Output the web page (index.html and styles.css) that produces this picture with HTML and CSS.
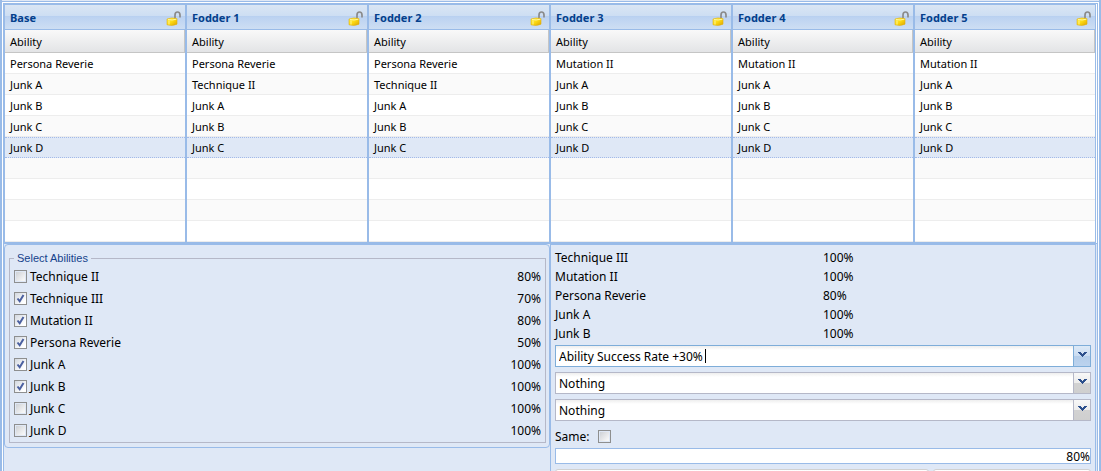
FILE: index.html
```html
<!DOCTYPE html>
<html lang="en">
<head>
<meta charset="utf-8">
<title>Ability Simulator</title>
<link rel="stylesheet" href="styles.css">
</head>
<body>
<svg class="defs" aria-hidden="true">
  <defs>
    <linearGradient id="gold" x1="0" y1="0" x2="1" y2="1">
      <stop offset="0" stop-color="#fff04a"/>
      <stop offset="0.5" stop-color="#fcd913"/>
      <stop offset="1" stop-color="#dda300"/>
    </linearGradient>
    <symbol id="lock" viewBox="0 0 16 16">
      <path d="M9 9V5Q9 2 11.500 2Q14 2 14 5V7.500" fill="none" stroke="#8a8a8a" stroke-width="1.700"/>
      <path d="M1 9Q6 7 11 8.600V14.200Q6 16.400 1 14.800Z" fill="url(#gold)" stroke="#e0b010" stroke-width="0.6"/>
      <path d="M2 9.500Q6 10.600 10.400 9.200" fill="none" stroke="#fff8a0" stroke-width="1"/>
      <path d="M3 10.500V14.500" stroke="#fff58c" stroke-width="1"/>
    </symbol>
  </defs>
</svg>
<main class="app">
  <div class="frame">
    <div class="grids">
      <section class="grid">
        <header class="title"><h2>Base</h2><button type="button" class="lock" aria-label="Lock Base"><svg><use href="#lock"/></svg></button></header>
        <table>
          <thead><tr><th>Ability</th></tr></thead>
          <tbody><tr><td>Persona Reverie</td></tr><tr><td>Junk A</td></tr><tr><td>Junk B</td></tr><tr><td>Junk C</td></tr><tr class="selected"><td>Junk D</td></tr><tr><td></td></tr><tr><td></td></tr><tr><td></td></tr><tr><td></td></tr></tbody>
        </table>
      </section>
      <section class="grid">
        <header class="title"><h2>Fodder 1</h2><button type="button" class="lock" aria-label="Lock Fodder 1"><svg><use href="#lock"/></svg></button></header>
        <table>
          <thead><tr><th>Ability</th></tr></thead>
          <tbody><tr><td>Persona Reverie</td></tr><tr><td>Technique II</td></tr><tr><td>Junk A</td></tr><tr><td>Junk B</td></tr><tr class="selected"><td>Junk C</td></tr><tr><td></td></tr><tr><td></td></tr><tr><td></td></tr><tr><td></td></tr></tbody>
        </table>
      </section>
      <section class="grid">
        <header class="title"><h2>Fodder 2</h2><button type="button" class="lock" aria-label="Lock Fodder 2"><svg><use href="#lock"/></svg></button></header>
        <table>
          <thead><tr><th>Ability</th></tr></thead>
          <tbody><tr><td>Persona Reverie</td></tr><tr><td>Technique II</td></tr><tr><td>Junk A</td></tr><tr><td>Junk B</td></tr><tr class="selected"><td>Junk C</td></tr><tr><td></td></tr><tr><td></td></tr><tr><td></td></tr><tr><td></td></tr></tbody>
        </table>
      </section>
      <section class="grid">
        <header class="title"><h2>Fodder 3</h2><button type="button" class="lock" aria-label="Lock Fodder 3"><svg><use href="#lock"/></svg></button></header>
        <table>
          <thead><tr><th>Ability</th></tr></thead>
          <tbody><tr><td>Mutation II</td></tr><tr><td>Junk A</td></tr><tr><td>Junk B</td></tr><tr><td>Junk C</td></tr><tr class="selected"><td>Junk D</td></tr><tr><td></td></tr><tr><td></td></tr><tr><td></td></tr><tr><td></td></tr></tbody>
        </table>
      </section>
      <section class="grid">
        <header class="title"><h2>Fodder 4</h2><button type="button" class="lock" aria-label="Lock Fodder 4"><svg><use href="#lock"/></svg></button></header>
        <table>
          <thead><tr><th>Ability</th></tr></thead>
          <tbody><tr><td>Mutation II</td></tr><tr><td>Junk A</td></tr><tr><td>Junk B</td></tr><tr><td>Junk C</td></tr><tr class="selected"><td>Junk D</td></tr><tr><td></td></tr><tr><td></td></tr><tr><td></td></tr><tr><td></td></tr></tbody>
        </table>
      </section>
      <section class="grid">
        <header class="title"><h2>Fodder 5</h2><button type="button" class="lock" aria-label="Lock Fodder 5"><svg><use href="#lock"/></svg></button></header>
        <table>
          <thead><tr><th>Ability</th></tr></thead>
          <tbody><tr><td>Mutation II</td></tr><tr><td>Junk A</td></tr><tr><td>Junk B</td></tr><tr><td>Junk C</td></tr><tr class="selected"><td>Junk D</td></tr><tr><td></td></tr><tr><td></td></tr><tr><td></td></tr><tr><td></td></tr></tbody>
        </table>
      </section>
    </div>
    <div class="lower">
      <section class="chooser">
        <fieldset class="abilities">
          <legend>Select Abilities</legend>
          <label class="option"><input type="checkbox" class="check"><span class="name">Technique II</span><span>80%</span></label>
          <label class="option"><input type="checkbox" class="check" checked><span class="name">Technique III</span><span>70%</span></label>
          <label class="option"><input type="checkbox" class="check" checked><span class="name">Mutation II</span><span>80%</span></label>
          <label class="option"><input type="checkbox" class="check" checked><span class="name">Persona Reverie</span><span>50%</span></label>
          <label class="option"><input type="checkbox" class="check" checked><span class="name">Junk A</span><span>100%</span></label>
          <label class="option"><input type="checkbox" class="check" checked><span class="name">Junk B</span><span>100%</span></label>
          <label class="option"><input type="checkbox" class="check"><span class="name">Junk C</span><span>100%</span></label>
          <label class="option"><input type="checkbox" class="check"><span class="name">Junk D</span><span>100%</span></label>
        </fieldset>
      </section>
      <section class="result">
        <table class="rates">
          <tbody>
            <tr><td>Technique III</td><td>100%</td></tr>
            <tr><td>Mutation II</td><td>100%</td></tr>
            <tr><td>Persona Reverie</td><td>80%</td></tr>
            <tr><td>Junk A</td><td>100%</td></tr>
            <tr><td>Junk B</td><td>100%</td></tr>
          </tbody>
        </table>
        <div class="combos">
          <div class="combo active">
            <input type="text" class="field" role="combobox" aria-label="Success rate item" aria-expanded="false" value="Ability Success Rate +30%">
            <span class="caret"></span>
            <button type="button" class="trigger" aria-label="Show items"><svg viewBox="0 0 9 6"><path d="M0 0H3V1H4V2H5V1H6V0H9V1H8V2H7V3H6V4H5V5H4V4H3V3H2V2H1V1H0Z"/></svg></button>
          </div>
          <div class="combo">
            <select class="field" aria-label="Second item"><option>Nothing</option></select>
            <span class="trigger"><svg viewBox="0 0 9 6"><path d="M0 0H3V1H4V2H5V1H6V0H9V1H8V2H7V3H6V4H5V5H4V4H3V3H2V2H1V1H0Z"/></svg></span>
          </div>
          <div class="combo">
            <select class="field" aria-label="Third item"><option>Nothing</option></select>
            <span class="trigger"><svg viewBox="0 0 9 6"><path d="M0 0H3V1H4V2H5V1H6V0H9V1H8V2H7V3H6V4H5V5H4V4H3V3H2V2H1V1H0Z"/></svg></span>
          </div>
        </div>
        <div class="same"><label for="same">Same:</label><input type="checkbox" class="check" id="same"></div>
        <output class="total">80%</output>
        <div class="actions"><button type="button"></button><button type="button"></button></div>
      </section>
    </div>
  </div>
</main>
</body>
</html>
```
FILE: styles.css
```css
* { box-sizing: border-box; }

body {
  margin: 0;
  background: #dfe8f6;
  color: #000;
  font: 12px/16px "Noto Sans", "Open Sans", sans-serif;
}

button, input, select { font: inherit; color: inherit; margin: 0; }

.defs { position: absolute; width: 0; height: 0; }

.app {
  display: flex;
  height: 100vh;
  overflow: hidden;
  padding: 1px 1px 0;
  border: solid #99bbe8;
  border-width: 0 2px;
  background: linear-gradient(#dfe8f6 1px, #99bbe8 1px, #99bbe8 2px, #fff 2px);
}

.frame {
  flex: 1;
  min-width: 0;
  margin-top: 2px;
  border: solid #99bbe8;
  border-width: 1px 1px 0;
  background: #dfe8f6;
}

.grids {
  display: grid;
  grid-template-columns: repeat(6, 1fr);
  padding-right: 1px;
  background: #fff;
}

.grid {
  border: 1px solid #99bbe8;
  font-size: 11px;
}

.title {
  display: flex;
  align-items: center;
  justify-content: space-between;
  height: 25px;
  padding: 1px 3px 0 5px;
  border-bottom: 1px solid #99bbe8;
  background: linear-gradient(#dae6f4, #cddef3 45%, #b7cff0 46%, #bbd2f1 50%, #cddef3);
}

.title h2 {
  margin: 0;
  padding-top: 1px;
  color: #04408c;
  font-size: 11px;
  font-weight: 700;
}

.lock {
  width: 16px;
  height: 16px;
  padding: 0;
  border: 0;
  background: none;
}

.lock svg { display: block; width: 16px; height: 16px; }

.grid table {
  width: 100%;
  border-spacing: 0;
  line-height: 16px;
}

.grid th {
  height: 23px;
  padding: 2px 5px 0;
  border: solid #c5c5c5;
  border-width: 0 1px 1px 0;
  background: linear-gradient(#f9f9f9, #e3e4e6);
  font-weight: 400;
  text-align: left;
}

.grid td {
  height: 21px;
  padding: 2px 5px 0;
  border-bottom: 1px solid #ededed;
  background: #fff;
}

.grid tr:nth-child(even) td { background: #fafafa; }

.grid .selected td {
  padding-top: 0;
  border-top: 1px dotted #a3bae9;
  border-bottom: 1px dotted #a3bae9;
  background: #dfe8f6;
}

.lower {
  display: grid;
  grid-template-columns: repeat(2, 1fr);
  align-items: start;
  padding-right: 1px;
  border-top: 1px solid #99bbe8;
}

.chooser {
  padding: 5px 3px 4px 4px;
  border: 1px solid #99bbe8;
  border-radius: 4px;
}

.abilities {
  min-width: 0;
  margin: 0;
  padding: 0 4px;
  border: 1px solid #b5b8c8;
}

.abilities legend {
  padding: 0 3px;
  color: #15428b;
  font: 11px/16px "Liberation Sans", Arial, sans-serif;
}

.option {
  display: flex;
  align-items: center;
  gap: 3px;
  height: 22px;
}

.option .name { flex: 1; }

.option .check { margin-bottom: 2px; }

.check {
  appearance: none;
  flex: none;
  width: 13px;
  height: 13px;
  border: 1px solid #8e8f8f;
  background: linear-gradient(135deg, #c9cdd2, #f6f6f6 80%);
  background-clip: content-box;
  background-color: #f4f4f4;
  padding: 1px;
}

.check:checked {
  background:
    url("data:image/svg+xml,%3Csvg xmlns='http://www.w3.org/2000/svg' viewBox='0 0 11 11'%3E%3Cpath d='M2.500 5.500L4.700 8.300L8.500 2' fill='none' stroke='%234b60a0' stroke-width='2'/%3E%3C/svg%3E") center / 11px 11px no-repeat,
    linear-gradient(135deg, #d3d8e0, #fff 80%);
}

.result {
  align-self: stretch;
  min-height: 250px;
  padding: 3px 4px 0;
  border: solid #99bbe8;
  border-width: 1px 1px 0;
}

.rates {
  width: 100%;
  table-layout: fixed;
  border-spacing: 0;
}

.rates td { height: 19px; padding: 0; }

.combos { display: grid; gap: 5px; margin-top: 2px; }

.combo {
  display: flex;
  position: relative;
  height: 22px;
  border: 1px solid #b5b8c8;
  background: linear-gradient(#eeeeee, #fff 4px);
}

.combo.active { border-color: #7eadd9; }

.field {
  flex: 1;
  min-width: 0;
  height: 20px;
  padding: 1px 3px 0;
  border: 0;
  outline: 0;
  appearance: none;
  background: none;
}

.caret {
  position: absolute;
  top: 3px;
  left: 149px;
  width: 1px;
  height: 14px;
  background: #000;
}

.trigger {
  display: grid;
  place-items: center;
  width: 17px;
  height: 20px;
  padding: 0 0 2px;
  border: 0;
  border-left: 1px solid #b5b8c8;
  background: linear-gradient(#f8f8f8, #ececec 50%, #d2d2d2 51%, #cfcfcf);
  pointer-events: none;
}

.active .trigger {
  border-color: #7eadd9;
  background: linear-gradient(#dce9f7, #cadcf1 50%, #b4cdea 51%, #bcd3ee);
  pointer-events: auto;
}

.trigger svg { width: 9px; height: 6px; fill: #2c4f8c; }

.same {
  display: flex;
  align-items: center;
  gap: 8px;
  height: 27px;
  padding-top: 4px;
}

.total {
  display: block;
  height: 16px;
  border: 1px solid #99bbe8;
  background: #fff;
  line-height: 16px;
  text-align: right;
}

.actions {
  display: grid;
  grid-template-columns: 373fr 158fr;
  gap: 4px;
  margin-top: 5px;
}

.actions button {
  height: 22px;
  border: 1px solid #d1d1d1;
  border-radius: 3px;
  background: linear-gradient(#fff, #e6e6e6);
}
```
